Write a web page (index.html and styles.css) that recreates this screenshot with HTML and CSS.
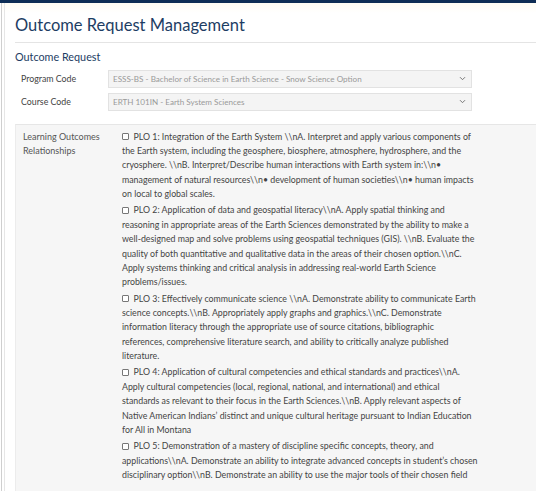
FILE: index.html
```html
<!DOCTYPE html>
<html lang="en">
<head>
<meta charset="utf-8">
<title>Outcome Request Management</title>
<link rel="stylesheet" href="styles.css">
</head>
<body>
<div class="topbar"></div>
<div class="shell">
  <div class="inner">
    <main class="page">
      <h1 class="title">Outcome Request Management</h1>
      <h2 class="section">Outcome Request</h2>
      <div class="form-row">
        <label class="form-label">Program Code</label>
        <div class="select">
          <span class="select-text">ESSS-BS - Bachelor of Science in Earth Science - Snow Science Option</span>
          <svg class="chev" width="7" height="5" viewBox="0 0 7 5"><path d="M1 1.2 L3.5 3.7 L6 1.2" fill="none" stroke="#777" stroke-width="1"/></svg>
        </div>
      </div>
      <div class="form-row">
        <label class="form-label">Course Code</label>
        <div class="select">
          <span class="select-text">ERTH 101IN - Earth System Sciences</span>
          <svg class="chev" width="7" height="5" viewBox="0 0 7 5"><path d="M1 1.2 L3.5 3.7 L6 1.2" fill="none" stroke="#777" stroke-width="1"/></svg>
        </div>
      </div>
      <section class="panel">
        <div class="panel-label">Learning Outcomes Relationships</div>
        <div class="plo-list">
          <p class="plo"><span class="box"></span>PLO 1: Integration of the Earth System \\nA. Interpret and apply various components of the Earth system, including the geosphere, biosphere, atmosphere, hydrosphere, and the cryosphere. \\nB. Interpret/Describe human interactions with Earth system in:\\n• management of natural resources\\n• development of human societies\\n• human impacts on local to global scales.</p>
          <p class="plo"><span class="box"></span>PLO 2: Application of data and geospatial literacy\\nA. Apply spatial thinking and reasoning in appropriate areas of the Earth Sciences demonstrated by the ability to make a well-designed map and solve problems using geospatial techniques (GIS). \\nB. Evaluate the quality of both quantitative and qualitative data in the areas of their chosen option.\\nC. Apply systems thinking and critical analysis in addressing real-world Earth Science problems/issues.</p>
          <p class="plo"><span class="box"></span>PLO 3: Effectively communicate science \\nA. Demonstrate ability to communicate Earth science concepts.\\nB. Appropriately apply graphs and graphics.\\nC. Demonstrate information literacy through the appropriate use of source citations, bibliographic references, comprehensive literature search, and ability to critically analyze published literature.</p>
          <p class="plo"><span class="box"></span>PLO 4: Application of cultural competencies and ethical standards and practices\\nA. Apply cultural competencies (local, regional, national, and international) and ethical standards as relevant to their focus in the Earth Sciences.\\nB. Apply relevant aspects of Native American Indians’ distinct and unique cultural heritage pursuant to Indian Education for All in Montana</p>
          <p class="plo"><span class="box"></span>PLO 5: Demonstration of a mastery of discipline specific concepts, theory, and applications\\nA. Demonstrate an ability to integrate advanced concepts in student’s chosen disciplinary option\\nB. Demonstrate an ability to use the major tools of their chosen field</p>
        </div>
      </section>
    </main>
  </div>
</div>
</body>
</html>
```

FILE: styles.css
```css
* { box-sizing: border-box; }
html, body { margin: 0; padding: 0; background: #fff; overflow: hidden; height: 491px; }
body { font-family: Lato, "Open Sans", "Liberation Sans", sans-serif; color: #444; }
.topbar { height: 3px; background: #0e2d55; }
.shell {
  margin-left: 1px;
  border-left: 1px solid #cfcfcf;
  padding-left: 2px;
  height: 488px;
  background: linear-gradient(#fffcf3, #fff 10px);
}
.inner {
  border-left: 1px solid #e6e6e6;
  padding-left: 10px;
  height: 100%;
}
.page { padding-top: 11.5px; }
.title {
  margin: 0;
  font-weight: 400;
  font-size: 16.5px;
  line-height: 20px;
  color: #1d3d64;
  padding-bottom: 7.5px;
  border-bottom: 1px solid #e4e4e4;
}
.section {
  margin: 6.5px 0 3.5px;
  font-weight: 400;
  font-size: 10.8px;
  line-height: 14px;
  color: #1d3d64;
}
.form-row { display: flex; align-items: center; height: 23px; }
.form-label { width: 93px; padding-left: 6px; font-size: 8.8px; color: #444; }
.select {
  width: 364px;
  height: 18px;
  border: 1px solid #e2e2e2;
  background: #f4f4f4;
  display: flex;
  align-items: center;
  justify-content: space-between;
  padding: 0 5px 0 4px;
}
.select-text { font-size: 8.1px; color: #9a9a9a; white-space: nowrap; }
.chev { flex: none; }
.panel {
  margin-top: 10.5px;
  background: #f6f6f6;
  border-top: 1px solid #e6e6e6;
  border-left: 1px solid #ececec;
  display: flex;
  padding: 5px 0 0 7px;
  height: 400px;
}
.panel-label { width: 99px; font-size: 9px; line-height: 14.4px; color: #555; }
.plo-list { width: 356px; }
.plo {
  margin: 0 0 1.8px;
  font-size: 8.8px;
  line-height: 14.4px;
  color: #444;
}
.box {
  display: inline-block;
  width: 7px;
  height: 7px;
  border: 1px solid #777;
  border-radius: 1px;
  background: #fff;
  margin-right: 4.5px;
  vertical-align: -0.5px;
}
```
